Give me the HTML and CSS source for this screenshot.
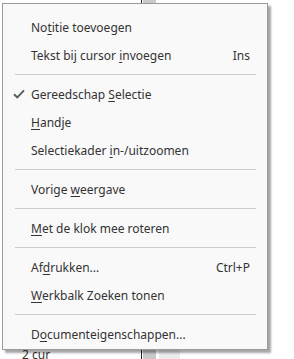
FILE: index.html
```html
<!DOCTYPE html>
<html lang="nl">

<head>
    <meta charset="UTF-8" />
    <meta name="viewport" content="width=device-width, initial-scale=1.0" />
    <title>Contextmenu</title>
    <link rel="stylesheet" href="styles.css">
</head>

<body>
    <!-- document behind the menu -->
    <div class="doc">
        <div class="doc-rule top"></div>
        <div class="doc-cell top"></div>
        <div class="doc-rule bottom"></div>
        <div class="doc-cell bottom"></div>
        <div class="doc-cell light bottom"></div>
        <div class="doc-text">2 cur</div>
    </div>

    <div class="menu">
        <div class="item"><span>No<u>t</u>itie toevoegen</span></div>
        <div class="item"><span>Tekst bij cursor <u>i</u>nvoegen</span><span class="key">Ins</span></div>
        <div class="sep"></div>
        <div class="item checked">
            <svg class="check" width="12" height="10" viewBox="0 0 12 10">
                <path d="M1 5.2 L4.3 8.4 L11 1.4" fill="none" stroke="#5a5a5a" stroke-width="1.9" />
            </svg>
            <span>Gereedschap <u>S</u>electie</span>
        </div>
        <div class="item"><span><u>H</u>andje</span></div>
        <div class="item"><span>Selectiekader <u>i</u>n-/uitzoomen</span></div>
        <div class="sep"></div>
        <div class="item"><span>Vorige <u>w</u>eergave</span></div>
        <div class="sep"></div>
        <div class="item"><span><u>M</u>et de klok mee roteren</span></div>
        <div class="sep"></div>
        <div class="item"><span>Af<u>d</u>rukken...</span><span class="key">Ctrl+P</span></div>
        <div class="item"><span><u>W</u>erkbalk Zoeken tonen</span></div>
        <div class="sep"></div>
        <div class="item"><span>D<u>o</u>cumenteigenschappen...</span></div>
    </div>
</body>

</html>
```

FILE: styles.css
```css
html,
body {
    margin: 0;
    height: 100%;
    overflow: hidden;
    background: #fff;
}

body {
    font-family: 'Noto Sans', 'Open Sans', sans-serif;
    position: relative;
}

.doc-rule {
    position: absolute;
    left: 141px;
    width: 1px;
    background: #222;
}

.doc-cell {
    position: absolute;
    left: 143px;
    width: 13px;
    background: #c9c9c9;
}

.doc-cell.light {
    left: 159px;
    width: 21px;
    background: #ececec;
}

.top {
    top: 0;
    height: 4px;
}

.bottom {
    top: 348px;
    height: 11px;
}

.doc-text {
    position: absolute;
    left: 22px;
    top: 348px;
    font-size: 12px;
    line-height: 14px;
    color: #333;
}

.menu {
    position: absolute;
    left: 2px;
    top: 3px;
    width: 264px;
    padding: 9px 0 1px;
    background: #f9f9f9;
    border: 1px solid #9a9a9a;
    box-shadow: 3px 3px 2px rgba(0, 0, 0, 0.35);
    color: #333;
    font-size: 12px;
}

.item {
    position: relative;
    display: flex;
    justify-content: space-between;
    align-items: center;
    height: 28px;
    padding: 0 17px 0 28px;
}

.item u {
    text-underline-offset: 2px;
}

.check {
    position: absolute;
    left: 10px;
    top: 9px;
}

.sep {
    height: 1px;
    margin: 5px 11px 5px 12px;
    background: #cdcdcd;
}
```
